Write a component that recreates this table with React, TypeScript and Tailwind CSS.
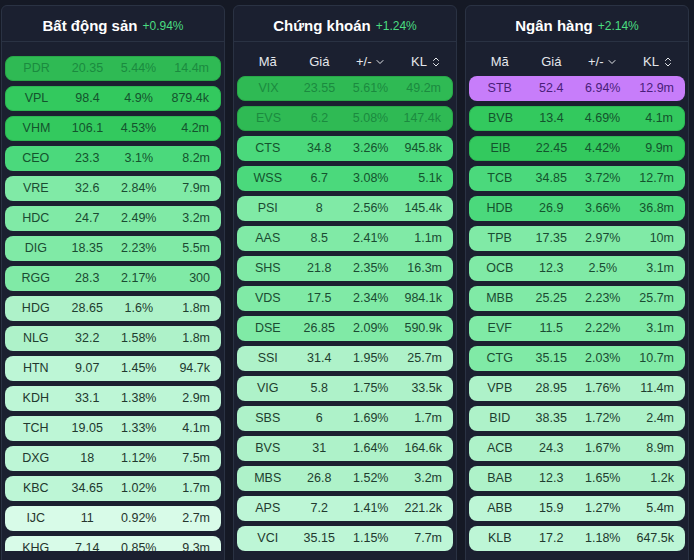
import React from 'react';
import { ChevronDown, ChevronsUpDown } from 'lucide-react';

type Row = [string, string, number, string];

const batDongSan: Row[] = [
  ['PDR', '20.35', 5.44, '14.4m'],
  ['VPL', '98.4', 4.9, '879.4k'],
  ['VHM', '106.1', 4.53, '4.2m'],
  ['CEO', '23.3', 3.1, '8.2m'],
  ['VRE', '32.6', 2.84, '7.9m'],
  ['HDC', '24.7', 2.49, '3.2m'],
  ['DIG', '18.35', 2.23, '5.5m'],
  ['RGG', '28.3', 2.17, '300'],
  ['HDG', '28.65', 1.6, '1.8m'],
  ['NLG', '32.2', 1.58, '1.8m'],
  ['HTN', '9.07', 1.45, '94.7k'],
  ['KDH', '33.1', 1.38, '2.9m'],
  ['TCH', '19.05', 1.33, '4.1m'],
  ['DXG', '18', 1.12, '7.5m'],
  ['KBC', '34.65', 1.02, '1.7m'],
  ['IJC', '11', 0.92, '2.7m'],
  ['KHG', '7.14', 0.85, '9.3m'],
];

const chungKhoan: Row[] = [
  ['VIX', '23.55', 5.61, '49.2m'],
  ['EVS', '6.2', 5.08, '147.4k'],
  ['CTS', '34.8', 3.26, '945.8k'],
  ['WSS', '6.7', 3.08, '5.1k'],
  ['PSI', '8', 2.56, '145.4k'],
  ['AAS', '8.5', 2.41, '1.1m'],
  ['SHS', '21.8', 2.35, '16.3m'],
  ['VDS', '17.5', 2.34, '984.1k'],
  ['DSE', '26.85', 2.09, '590.9k'],
  ['SSI', '31.4', 1.95, '25.7m'],
  ['VIG', '5.8', 1.75, '33.5k'],
  ['SBS', '6', 1.69, '1.7m'],
  ['BVS', '31', 1.64, '164.6k'],
  ['MBS', '26.8', 1.52, '3.2m'],
  ['APS', '7.2', 1.41, '221.2k'],
  ['VCI', '35.15', 1.15, '7.7m'],
];

const nganHang: Row[] = [
  ['STB', '52.4', 6.94, '12.9m'],
  ['BVB', '13.4', 4.69, '4.1m'],
  ['EIB', '22.45', 4.42, '9.9m'],
  ['TCB', '34.85', 3.72, '12.7m'],
  ['HDB', '26.9', 3.66, '36.8m'],
  ['TPB', '17.35', 2.97, '10m'],
  ['OCB', '12.3', 2.5, '3.1m'],
  ['MBB', '25.25', 2.23, '25.7m'],
  ['EVF', '11.5', 2.22, '3.1m'],
  ['CTG', '35.15', 2.03, '10.7m'],
  ['VPB', '28.95', 1.76, '11.4m'],
  ['BID', '38.35', 1.72, '2.4m'],
  ['ACB', '24.3', 1.67, '8.9m'],
  ['BAB', '12.3', 1.65, '1.2k'],
  ['ABB', '15.9', 1.27, '5.4m'],
  ['KLB', '17.2', 1.18, '647.5k'],
];

// màu theo % tăng (trần = tím)
const rowColor = (pct: number) => {
  if (pct >= 6.9) return 'bg-[#c77dfa] text-[#4a1d7a]';
  if (pct >= 5) return 'bg-[#2fba54] text-[#1b8a3f] border border-[#28a848]';
  if (pct >= 4) return 'bg-[#33c95e] text-[#14532d] border border-[#2bb853]';
  if (pct >= 3) return 'bg-[#4bd97c] text-[#14532d]';
  if (pct >= 2) return 'bg-[#80eaa6] text-[#1b4a32]';
  if (pct >= 1.5) return 'bg-[#aef2c9] text-[#1f3d2f]';
  if (pct >= 1) return 'bg-[#bdf6d6] text-[#22382e]';
  return 'bg-[#d8fbe8] text-[#26352d]';
};

const Panel: React.FC<{ title: string; change: string; rows: Row[]; showHead?: boolean }> = ({
  title,
  change,
  rows,
  showHead = true,
}) => {
  return (
    <div className="w-[224px] h-[600px] shrink-0 bg-[#1b2030] border border-[#2a3243] rounded-md flex flex-col">
      {/* Tiêu đề nhóm ngành */}
      <div className="h-[36px] flex items-center justify-center gap-[5px] pt-[5px] border-b border-[#2a3243]">
        <span className="text-[15px] font-bold text-white">{title}</span>
        <span className="text-[12px] font-medium text-[#4ade80]">{change}</span>
      </div>

      <div className={`h-[509px] overflow-hidden px-[3px] ${showHead ? '' : 'pt-[14px]'}`}>
        {showHead && (
          <div className="h-[34px] grid grid-cols-4 items-center px-[5px] pt-[5px] text-[13px] font-medium text-[#e5e7eb]">
            <span className="text-center">Mã</span>
            <span className="text-center">Giá</span>
            <span className="flex items-center justify-center gap-[2px]">
              +/-
              <ChevronDown size={12} strokeWidth={2} />
            </span>
            <span className="flex items-center justify-end gap-[3px] pr-[6px]">
              KL
              <ChevronsUpDown size={12} strokeWidth={2} />
            </span>
          </div>
        )}
        <div className="flex flex-col gap-[5px]">
          {rows.map(([code, price, pct, vol]) => (
            <div
              key={code}
              className={`h-[25px] shrink-0 rounded-lg grid grid-cols-4 items-center px-[5px] text-[12.5px] ${rowColor(pct)}`}
            >
              <span className="text-center">{code}</span>
              <span className="text-center">{price}</span>
              <span className="text-center">{pct}%</span>
              <span className="text-right pr-[6px]">{vol}</span>
            </div>
          ))}
        </div>
      </div>
    </div>
  );
};

export default function App() {
  return (
    <div
      className="w-[694px] h-[560px] overflow-hidden bg-[#151925] pt-[5px] pl-[1px] flex gap-[8px]"
      style={{ fontFamily: '"Liberation Sans", Arial, sans-serif' }}
    >
      <Panel title="Bất động sản" change="+0.94%" rows={batDongSan} showHead={false} />
      <Panel title="Chứng khoán" change="+1.24%" rows={chungKhoan} />
      <Panel title="Ngân hàng" change="+2.14%" rows={nganHang} />
    </div>
  );
}
